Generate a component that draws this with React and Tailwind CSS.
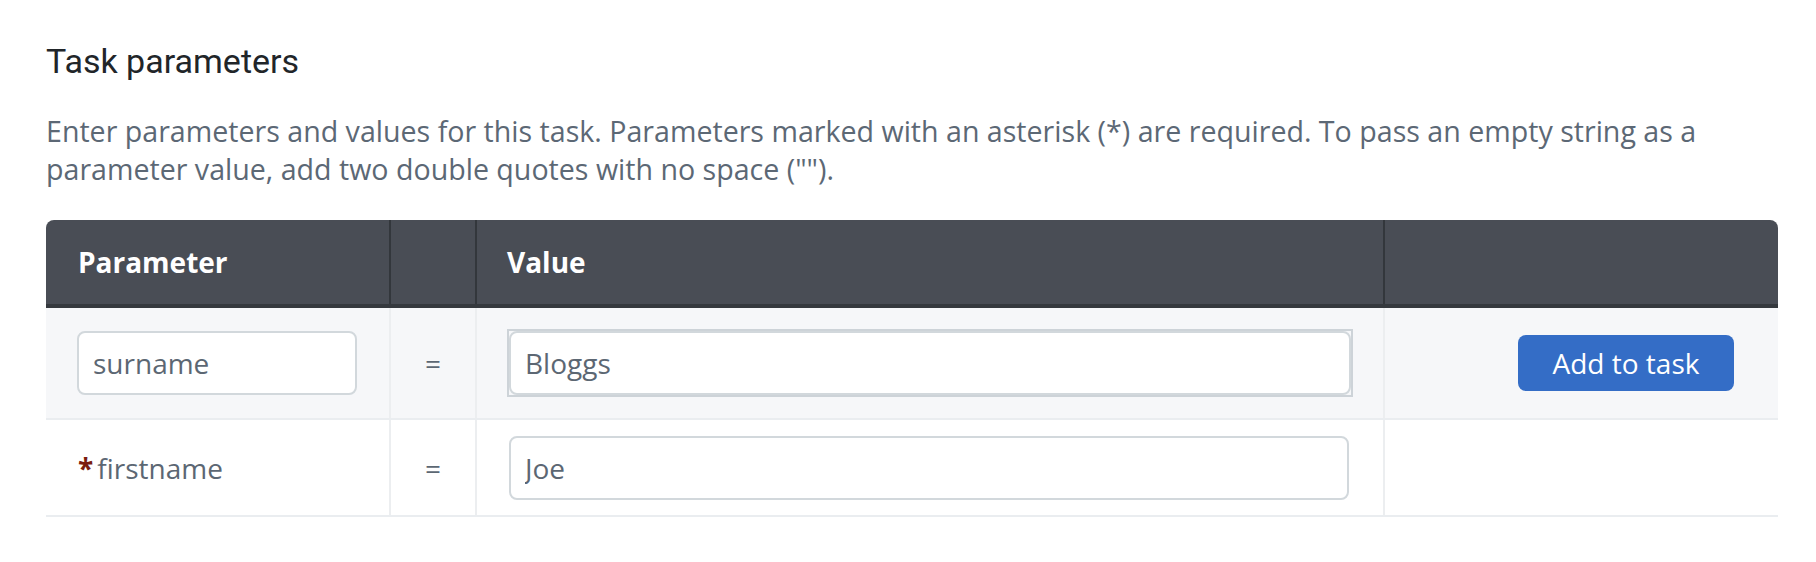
export default function App() {
  const cols = 'grid grid-cols-[343px_86px_908px_395px]'

  return (
    <div className="min-h-[562px] bg-white pl-[46px] pt-[41px] font-['Open_Sans',sans-serif]">
      <h2 className="font-['Roboto',sans-serif] text-[34px] leading-[40px] text-[#212529]">Task parameters</h2>
      <p className="mt-[31px] w-[1732px] text-[28.6px] leading-[38px] text-[#5c6875]">
        Enter parameters and values for this task. Parameters marked with an asterisk (*) are required. To pass an empty string as a parameter value, add two double quotes with no space ("").
      </p>

      <div className="mt-[32px] w-[1732px]">
        {/* Header */}
        <div className={`${cols} h-[88px] rounded-t-lg bg-[#494d55] border-b-4 border-[#35393e] text-[28px] font-bold text-white`}>
          <div className="flex items-center pl-[32px]">Parameter</div>
          <div className="border-l-2 border-[#33373c]" />
          <div className="flex items-center pl-[30px] border-l-2 border-[#33373c]">Value</div>
          <div className="border-l-2 border-[#33373c]" />
        </div>

        {/* Row 1 */}
        <div className={`${cols} h-[112px] bg-[#f6f7f9] border-b-2 border-[#eaedf0] text-[28px] text-[#5c6773]`}>
          <div className="flex items-center pl-[31px]">
            <input
              defaultValue="surname"
              className="h-[64px] w-[280px] rounded-lg border-2 border-[#d2d8dc] bg-white px-[14px] text-[28px] text-[#5c6773] outline-none"
            />
          </div>
          <div className="flex items-center justify-center border-l-2 border-[#eceef0]">=</div>
          <div className="flex items-center pl-[30px] border-l-2 border-[#eceef0]">
            <div className="border-2 border-[#cdd3d8]">
              <input
                defaultValue="Bloggs"
                className="block h-[64px] w-[842px] rounded-lg border-2 border-[#d2d8dc] bg-white px-[14px] text-[28px] text-[#5c6773] outline-none"
              />
            </div>
          </div>
          <div className="flex items-center justify-end pr-[44px] border-l-2 border-[#eceef0]">
            <button className="h-[56px] w-[216px] rounded-lg bg-[#346dc6] text-[28px] text-white">Add to task</button>
          </div>
        </div>

        {/* Row 2 */}
        <div className={`${cols} h-[97px] border-b-2 border-[#eaedf0] text-[28px] text-[#5c6773]`}>
          <div className="flex items-center pl-[32px]">
            <span className="mr-[4px] font-bold text-[#7b1c0e]">*</span>
            <span>firstname</span>
          </div>
          <div className="flex items-center justify-center border-l-2 border-[#eceef0]">=</div>
          <div className="flex items-center pl-[32px] border-l-2 border-[#eceef0]">
            <input
              defaultValue="Joe"
              className="h-[64px] w-[840px] rounded-lg border-2 border-[#d2d8dc] bg-white px-[14px] text-[28px] text-[#5c6773] outline-none"
            />
          </div>
          <div className="border-l-2 border-[#eceef0]" />
        </div>
      </div>
    </div>
  )
}
